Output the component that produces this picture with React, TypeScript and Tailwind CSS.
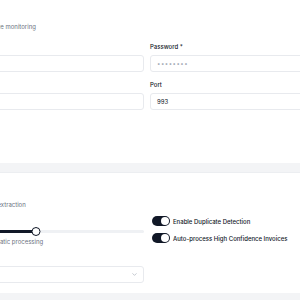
import { ChevronDown } from "lucide-react"

function Field({ label, value, muted }: { label: string; value: string; muted?: boolean }) {
  return (
    <div className="flex flex-col">
      <label className="text-[6px] leading-[8px] font-medium text-[#111827] mb-[4px]">{label}</label>
      <div className="h-[17px] rounded-[3px] border border-[#e8eaee] bg-white px-[6px] flex items-center">
        <span className={muted ? "text-[6px] text-[#9ca3af] tracking-[0.5px]" : "text-[6px] text-[#111827]"}>{value}</span>
      </div>
    </div>
  )
}

function Toggle({ label }: { label: string }) {
  return (
    <div className="flex items-center gap-[3px] h-[10px] ml-[2px]">
      <div className="w-[18px] h-[10px] rounded-full bg-[#111827] flex items-center justify-end px-[1px]">
        <div className="w-[8px] h-[8px] rounded-full bg-white" />
      </div>
      <span className="text-[6px] font-medium text-[#111827]">{label}</span>
    </div>
  )
}

export default function App() {
  const threshold = 55

  return (
    <div className="w-[300px] h-[300px] overflow-hidden bg-[#f3f4f6] font-['Inter',sans-serif]">
      <div className="-ml-[110px] w-[514px] flex flex-col gap-[10px]">
        {/* Email settings */}
        <div className="bg-white px-[14px] pt-[9px] h-[163px]">
          <h2 className="text-[8px] leading-[10px] font-semibold text-[#111827]">Email Settings</h2>
          <p className="text-[6px] leading-[8px] text-[#6b7280] mt-[4px] whitespace-nowrap">Configure IMAP mailbox for invoice monitoring</p>
          <div className="grid grid-cols-2 gap-x-[6px] gap-y-[9px] mt-[12px]">
            <Field label="Username *" value="" />
            <Field label="Password *" value="••••••••" muted />
            <Field label="Server" value="" />
            <Field label="Port" value="993" />
          </div>
        </div>

        {/* Extraction settings */}
        <div className="bg-white px-[14px] pt-[14px] h-[120px] shadow-[0_-1px_0_#eceef1]">
          <h2 className="text-[8px] leading-[10px] font-semibold text-[#111827]">AI Extraction</h2>
          <p className="text-[6px] leading-[8px] text-[#6b7280] mt-[4px] whitespace-nowrap">Configure the AI for invoice data extraction</p>
          <div className="grid grid-cols-2 gap-x-[6px] mt-[7px] items-start">
            <div className="flex flex-col">
              <label className="text-[6px] leading-[8px] font-medium text-[#111827]">Confidence Threshold</label>
              <div className="relative h-[9px] mt-[3px] flex items-center">
                <div className="w-full h-[3px] rounded-full bg-[#eff1f4]">
                  <div className="h-[3px] rounded-full bg-[#111827]" style={{ width: `${threshold}%` }} />
                </div>
                <div
                  className="absolute top-0 w-[9px] h-[9px] rounded-full bg-white border-[1.5px] border-[#111827] -translate-x-1/2"
                  style={{ left: `${threshold}%` }}
                />
              </div>
              <p className="text-[6px] leading-[8px] text-[#6b7280] mt-[2px] whitespace-nowrap">Minimum AI confidence for automatic processing</p>
              <label className="text-[6px] leading-[8px] font-medium text-[#111827] mt-[8px] mb-[4px]">Language</label>
              <div className="h-[17px] rounded-[3px] border border-[#e8eaee] bg-white pl-[6px] pr-[5px] flex items-center justify-between">
                <span className="text-[6px] text-[#111827]">Auto</span>
                <ChevronDown className="w-[7px] h-[7px] text-[#9ca3af]" />
              </div>
            </div>
            <div className="flex flex-col gap-[7px]">
              <Toggle label="Enable Duplicate Detection" />
              <Toggle label="Auto-process High Confidence Invoices" />
            </div>
          </div>
        </div>
      </div>
    </div>
  )
}
